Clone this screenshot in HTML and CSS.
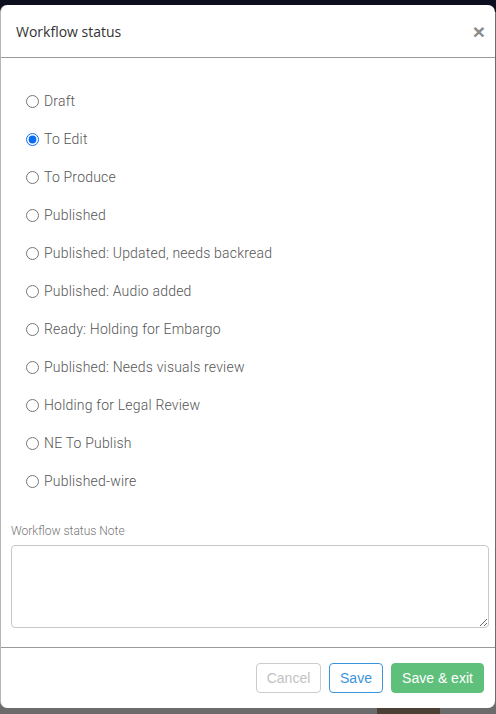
FILE: index.html
```html
<!DOCTYPE html>
<html lang="en">
<head>
<meta charset="UTF-8">
<meta name="viewport" content="width=device-width, initial-scale=1.0">
<title>Workflow status</title>
<link rel="stylesheet" href="styles.css">
</head>
<body>
    <div class="modal">
        <div class="modal-header">
            <h1>Workflow status</h1>
            <button class="close-btn" aria-label="Close">&times;</button>
        </div>
        <div class="modal-body">
            <div class="status-list">
                <label class="status"><input type="radio" name="status"> Draft</label>
                <label class="status"><input type="radio" name="status" checked> To Edit</label>
                <label class="status"><input type="radio" name="status"> To Produce</label>
                <label class="status"><input type="radio" name="status"> Published</label>
                <label class="status"><input type="radio" name="status"> Published: Updated, needs backread</label>
                <label class="status"><input type="radio" name="status"> Published: Audio added</label>
                <label class="status"><input type="radio" name="status"> Ready: Holding for Embargo</label>
                <label class="status"><input type="radio" name="status"> Published: Needs visuals review</label>
                <label class="status"><input type="radio" name="status"> Holding for Legal Review</label>
                <label class="status"><input type="radio" name="status"> NE To Publish</label>
                <label class="status"><input type="radio" name="status"> Published-wire</label>
            </div>
            <label class="note-label" for="note">Workflow status Note</label>
            <textarea id="note"></textarea>
        </div>
        <div class="modal-footer">
            <button class="btn btn-cancel" disabled>Cancel</button>
            <button class="btn btn-save">Save</button>
            <button class="btn btn-exit">Save &amp; exit</button>
        </div>
    </div>
    <div class="backdrop-photo"></div>
</body>
</html>
```

FILE: styles.css
```css
body {
    margin: 0;
    height: 714px;
    overflow: hidden;
    font-family: Roboto, "Noto Sans", sans-serif;
    background: linear-gradient(#0e0f1e 0, #0e0f1e 12px, #6b6b6b 12px);
}
.modal {
    margin-top: 5px;
    width: 495px;
    height: 703px;
    box-sizing: border-box;
    background-color: #fff;
    border-left: 1px solid #b5b5b5;
    border-radius: 7px;
    display: flex;
    flex-direction: column;
}
.modal-header {
    height: 53px;
    box-sizing: border-box;
    border-bottom: 1px solid #9a9a9a;
    display: flex;
    align-items: center;
    justify-content: space-between;
    padding: 0 10px 0 15px;
}
.modal-header h1 {
    margin: 0;
    font-family: "Open Sans", Roboto, sans-serif;
    font-size: 14px;
    font-weight: 500;
    color: #333;
}
.close-btn {
    border: none;
    background: none;
    padding: 0;
    font-family: Arial, "Liberation Sans", sans-serif;
    font-size: 21px;
    font-weight: bold;
    line-height: 1;
    color: #8a8a8a;
    cursor: pointer;
}
.modal-body {
    flex: 1;
    padding: 24px 7px 0 10px;
}
.status-list {
    display: flex;
    flex-direction: column;
    padding-left: 15px;
    margin-bottom: 24px;
}
.status {
    height: 38px;
    display: flex;
    align-items: center;
    font-size: 14px;
    font-weight: 300;
    letter-spacing: 0.2px;
    color: #555;
}
.status input {
    width: 13px;
    height: 13px;
    margin: 0 5px 0 0;
    accent-color: #0a6cf2;
}
.note-label {
    display: block;
    font-size: 12px;
    font-weight: 300;
    color: #777;
    margin-bottom: 7px;
}
textarea {
    display: block;
    width: 478px;
    height: 83px;
    box-sizing: border-box;
    border: 1px solid #c8c8c8;
    border-radius: 4px;
    resize: vertical;
}
.modal-footer {
    height: 61px;
    box-sizing: border-box;
    border-top: 1px solid #9a9a9a;
    display: flex;
    justify-content: flex-end;
    align-items: center;
    gap: 8px;
    padding: 0 11px 0 0;
}
.btn {
    height: 30px;
    padding: 0;
    font-family: Arial, "Liberation Sans", sans-serif;
    font-size: 14px;
    white-space: nowrap;
    border-radius: 4px;
    background-color: #fff;
    cursor: pointer;
}
.btn-cancel {
    width: 65px;
    border: 1px solid #ccc;
    color: #c2c2c2;
}
.btn-save {
    width: 54px;
    border: 1px solid #3b95dc;
    color: #3b95dc;
}
.btn-exit {
    width: 93px;
    border: 1px solid #5fc07b;
    background-color: #5fc07b;
    color: #fff;
}
.backdrop-photo {
    margin-left: 377px;
    width: 63px;
    height: 6px;
    background-color: #4c3f36;
}
```
